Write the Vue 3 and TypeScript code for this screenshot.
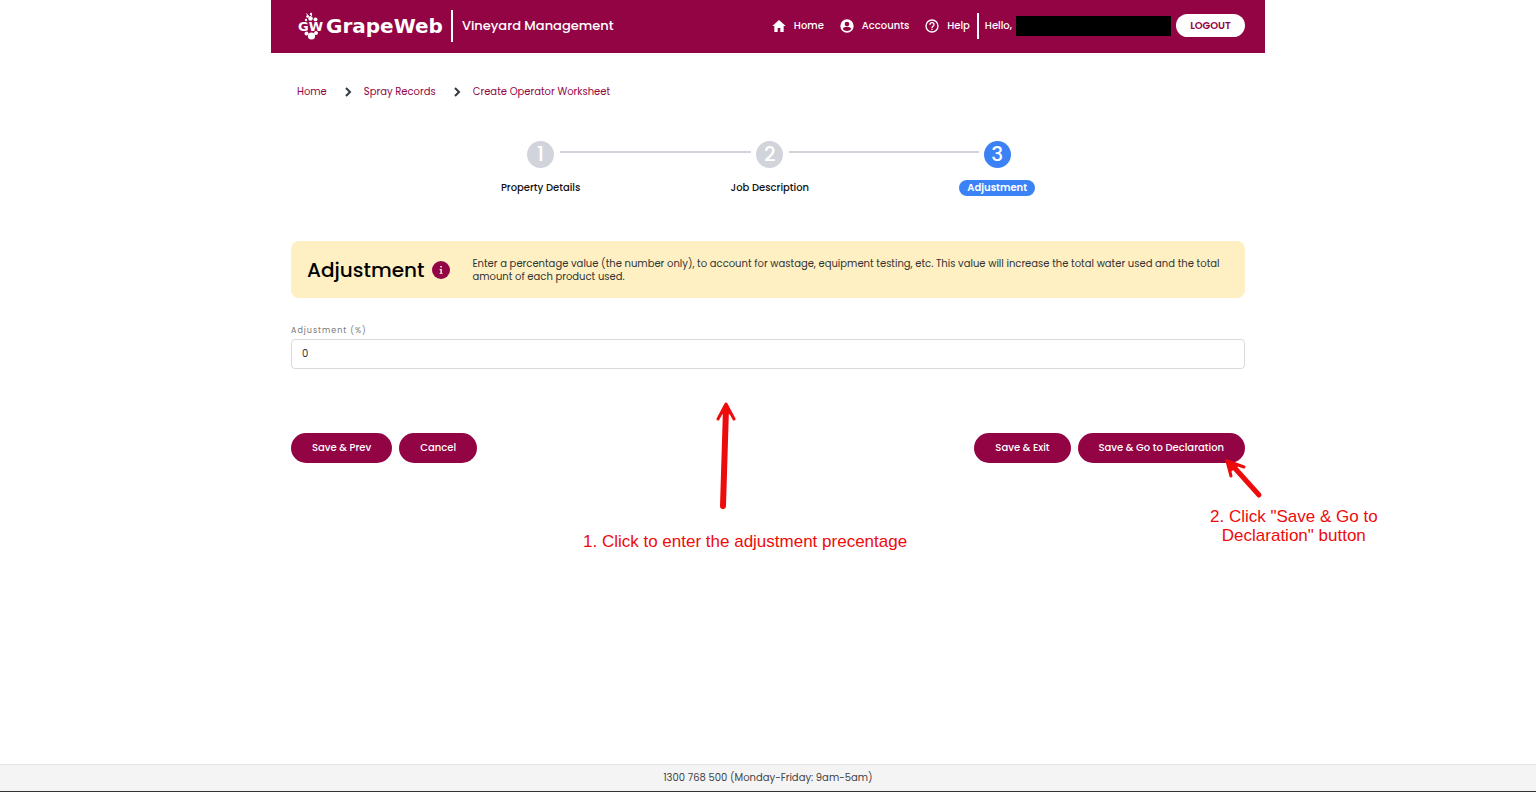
<script setup lang="ts">
import { ref } from 'vue'

interface Step {
  id: number
  label: string
}

const crumbs: string[] = ['Home', 'Spray Records', 'Create Operator Worksheet']
const steps: Step[] = [
  { id: 1, label: 'Property Details' },
  { id: 2, label: 'Job Description' },
  { id: 3, label: 'Adjustment' },
]
const currentStep = 3
const adjustment = ref('0')
</script>

<template>
  <div class="page">
    <header class="topbar">
      <a class="brand" href="#">
        <svg class="brand-mark" viewBox="0 0 26 28" width="26" height="28" aria-hidden="true">
          <g fill="#fff">
            <circle cx="10.5" cy="4.5" r="1.3" />
            <circle cx="14" cy="2" r="1.2" />
            <circle cx="13.500" cy="6.500" r="2.300" />
            <circle cx="18.500" cy="7.500" r="2" />
            <circle cx="9" cy="8" r="1.2" />
            <circle cx="9.500" cy="21.500" r="2" />
            <circle cx="19" cy="21" r="2" />
            <circle cx="14.500" cy="24" r="3.600" />
          </g>
          <path d="M9.500 1.500l3 4M15 3l-3 3" stroke="#fff" stroke-width="1" />
          <text class="brand-initials" x="1" y="19">GW</text>
        </svg>
        <span class="brand-name">GrapeWeb</span>
      </a>
      <span class="product">Vineyard Management</span>
      <nav class="nav" aria-label="Main">
        <a href="#">
          <svg viewBox="0 0 24 24" width="16" height="16" aria-hidden="true">
            <path fill="#fff" d="M10 21v-6h4v6h5v-9h3L12 3 2 12h3v9z" />
          </svg>
          Home
        </a>
        <a href="#">
          <svg viewBox="0 0 24 24" width="16" height="16" aria-hidden="true">
            <path
              fill="#fff"
              fill-rule="evenodd"
              d="M12 2a10 10 0 1 0 0 20 10 10 0 0 0 0-20zm0 3.500a3.500 3.500 0 1 1 0 7 3.500 3.500 0 0 1 0-7zM12 19.500c-2.700 0-5-1.300-6.300-3.400.1-2 4.200-3 6.300-3s6.200 1 6.300 3c-1.300 2.100-3.600 3.400-6.300 3.400z"
            />
          </svg>
          Accounts
        </a>
        <a href="#">
          <svg viewBox="0 0 24 24" width="16" height="16" aria-hidden="true">
            <path
              fill="#fff"
              d="M11 18h2v-2h-2zm1-16a10 10 0 1 0 0 20 10 10 0 0 0 0-20zm0 18a8 8 0 1 1 0-16 8 8 0 0 1 0 16zm0-14a4 4 0 0 0-4 4h2a2 2 0 1 1 4 0c0 2-3 1.750-3 5h2c0-2.250 3-2.500 3-5a4 4 0 0 0-4-4z"
            />
          </svg>
          Help
        </a>
      </nav>
      <div class="account">
        <span>Hello,</span>
        <span class="redacted"></span>
        <button class="logout" type="button">LOGOUT</button>
      </div>
    </header>

    <main class="content">
      <nav aria-label="Breadcrumb">
        <ol class="crumbs">
          <li v-for="(crumb, i) in crumbs" :key="crumb">
            <svg v-if="i > 0" viewBox="0 0 7 10" width="7" height="10" aria-hidden="true">
              <path d="M1 1l4 4-4 4" fill="none" stroke="#333b40" stroke-width="2" />
            </svg>
            <a href="#">{{ crumb }}</a>
          </li>
        </ol>
      </nav>

      <div class="stepper">
        <template v-for="step in steps" :key="step.id">
          <span v-if="step.id > 1" class="connector"></span>
          <div class="step" :class="{ active: step.id === currentStep }">
            <span class="bubble">{{ step.id }}</span>
            <span class="step-label">{{ step.label }}</span>
          </div>
        </template>
      </div>

      <section class="banner">
        <h1>Adjustment</h1>
        <svg viewBox="0 0 18 18" width="18" height="18" aria-hidden="true">
          <circle cx="9" cy="9" r="9" fill="#930445" />
          <path d="M8.300 5h1.500v1.500H8.300zM7.500 8h2.300v4h.9v.8H7.500V12h.9V8.800h-.9z" fill="#fff" />
        </svg>
        <p>
          Enter a percentage value (the number only), to account for wastage, equipment testing, etc.
          This value will increase the total water used and the total amount of each product used.
        </p>
      </section>

      <form class="form" @submit.prevent>
        <label for="adjustment">Adjustment (%)</label>
        <input id="adjustment" v-model="adjustment" type="text" inputmode="decimal" />
        <div class="actions">
          <button type="button">Save &amp; Prev</button>
          <button type="button">Cancel</button>
          <button class="push" type="button">Save &amp; Exit</button>
          <button type="submit">Save &amp; Go to Declaration</button>
        </div>
      </form>

      <div class="note note-enter">
        <svg viewBox="0 0 24 112" width="24" height="112" aria-hidden="true">
          <path d="M7 106L10 8" stroke-width="6" />
          <path d="M2 19L10 4l8 15" stroke-width="3" />
          <path class="head" d="M10 4L4 15l6-3 6 3z" stroke-width="1" />
        </svg>
        <p>1. Click to enter the adjustment precentage</p>
      </div>
      <div class="note note-save">
        <svg viewBox="0 0 40 42" width="40" height="42" aria-hidden="true">
          <path d="M36 38L9 8" stroke-width="5" />
          <path d="M8 19L4 4l17 6" stroke-width="3" />
          <path class="head" d="M3 3l4 12 9-7z" stroke-width="1" />
        </svg>
        <p>2. Click "Save &amp; Go to<br />Declaration" button</p>
      </div>
    </main>

    <footer class="footer">1300 768 500 (Monday-Friday: 9am-5am)</footer>
  </div>
</template>

<style>
body {
  margin: 0;
  background: #fff;
}
</style>

<style scoped>
.page {
  display: flex;
  flex-direction: column;
  min-height: 100vh;
  font-family: Poppins, Inter, "Liberation Sans", sans-serif;
  font-size: 10px;
  line-height: 16px;
  color: #111;
}

.page *,
.page {
  box-sizing: border-box;
}

a {
  color: inherit;
  text-decoration: none;
}

button,
input {
  font: inherit;
}

.topbar,
.content {
  width: 100%;
  max-width: 994px;
  margin: 0 auto;
}

.topbar {
  display: flex;
  align-items: center;
  height: 53px;
  padding: 0 20px 2px 26px;
  background: #930445;
  color: #fff;
  font-weight: 500;
}

.brand {
  display: flex;
  align-items: center;
  gap: 3px;
}

.brand-initials {
  font: bold 13px "DejaVu Sans", sans-serif;
  fill: #fff;
  stroke: #930445;
  stroke-width: 1px;
  paint-order: stroke;
}

.brand-name {
  font: bold 20px "DejaVu Sans", sans-serif;
}

.product {
  display: flex;
  align-items: center;
  height: 32px;
  margin-left: 8px;
  padding-left: 9px;
  border-left: 2px solid #fff;
  font-size: 13px;
}

.nav {
  display: flex;
  gap: 15px;
  margin-left: auto;
}

.nav a {
  display: flex;
  align-items: center;
  gap: 7px;
}

.account {
  display: flex;
  align-items: center;
  height: 26px;
  margin-left: 7px;
  padding-left: 6px;
  border-left: 2px solid #fff;
}

.redacted {
  width: 155px;
  height: 20px;
  margin: 0 5px 0 4px;
  background: #000;
}

.logout {
  width: 69px;
  height: 23px;
  padding: 0;
  border: 0;
  border-radius: 12px;
  background: #fff;
  color: #930445;
  font-weight: 600;
}

.content {
  position: relative;
  flex: 1;
  padding: 31px 20px 0;
}

.crumbs {
  display: flex;
  gap: 18px;
  margin: 0;
  padding: 0 6px;
  list-style: none;
  color: #930445;
}

.crumbs li {
  display: flex;
  align-items: center;
  gap: 12px;
}

.stepper {
  display: flex;
  width: 56%;
  min-width: 320px;
  margin: 41px auto 0;
}

.step {
  display: flex;
  flex-direction: column;
  align-items: center;
  gap: 12px;
}

.bubble {
  width: 27px;
  height: 27px;
  border-radius: 50%;
  background: #d1d5db;
  color: #fff;
  font-size: 20px;
  font-weight: 500;
  line-height: 27px;
  text-align: center;
}

.step-label {
  font-weight: 500;
}

.connector {
  flex: 1;
  height: 2px;
  margin: 10px -20px 0;
  background: #d1d5db;
}

.active .bubble {
  background: #3b82f6;
}

.active .step-label {
  padding: 0 8px;
  border-radius: 8px;
  background: #3b82f6;
  color: #fff;
  font-weight: 600;
}

.banner {
  display: flex;
  align-items: center;
  gap: 8px;
  min-height: 57px;
  margin-top: 45px;
  padding: 0 16px;
  border-radius: 8px;
  background: #fef0c3;
}

.banner svg {
  flex: none;
}

.banner h1 {
  margin: 0;
  color: #000;
  font-size: 20px;
  font-weight: 500;
  line-height: 28px;
}

.banner p {
  margin: 0 0 0 14px;
  color: #333;
  line-height: 13px;
}

.form label {
  display: block;
  margin-top: 27px;
  color: #777;
  font-size: 8px;
  letter-spacing: 1px;
  line-height: 12px;
}

.form input {
  width: 100%;
  height: 30px;
  margin-top: 2px;
  padding: 0 10px;
  border: 1px solid #d9dade;
  border-radius: 4px;
  background: #fff;
  color: #333;
}

.actions {
  display: flex;
  flex-wrap: wrap;
  gap: 7px;
  margin-top: 64px;
}

.actions button {
  height: 30px;
  padding: 0 21px;
  border: 0;
  border-radius: 15px;
  background: #930445;
  color: #fff;
  font-weight: 500;
}

.actions .push {
  margin-left: auto;
}

/* Tutorial call-outs laid over the form */
.note {
  position: absolute;
  color: #ed0b0b;
  font: 17px/19px "Liberation Sans", Arial, sans-serif;
  white-space: nowrap;
  pointer-events: none;
}

.note svg {
  display: block;
  fill: none;
  stroke: #ed0b0b;
  stroke-linecap: round;
  stroke-linejoin: round;
}

.note .head {
  fill: #ed0b0b;
}

.note p {
  margin: 0;
}

.note-enter {
  top: 347px;
  left: 312px;
}

.note-enter svg {
  margin: 0 0 20px 133px;
}

.note-save {
  top: 404px;
  left: 939px;
  text-align: center;
}

.note-save svg {
  margin: 0 0 8px 13px;
}

.footer {
  height: 28px;
  border-top: 1px solid #e3e3e3;
  border-bottom: 1px solid #333;
  background: #f4f4f4;
  color: #444;
  line-height: 26px;
  text-align: center;
}
</style>
